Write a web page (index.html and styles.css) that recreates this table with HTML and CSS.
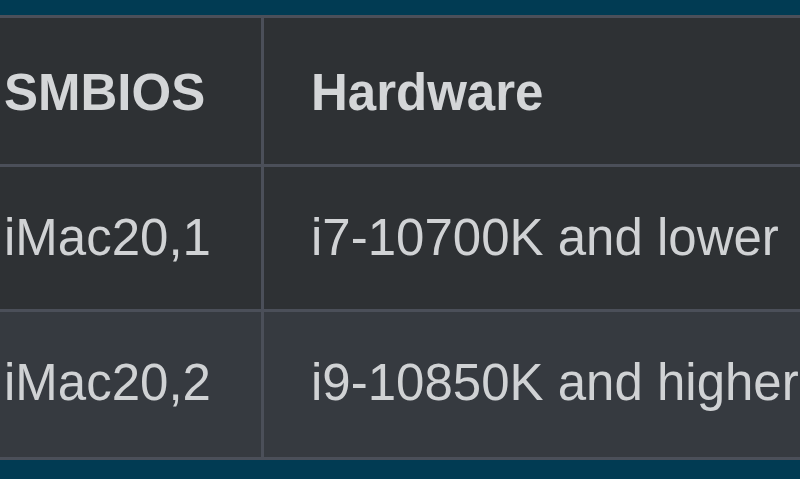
FILE: index.html
```html
<!DOCTYPE html>
<html lang="en">
<head>
<meta charset="utf-8">
<title>SMBIOS table</title>
<link rel="stylesheet" href="styles.css">
</head>
<body>
<table class="spec-table">
  <thead>
    <tr class="row row-head">
      <th class="cell cell-first">SMBIOS</th>
      <th class="cell">Hardware</th>
    </tr>
  </thead>
  <tbody>
    <tr class="row row-one">
      <td class="cell cell-first">iMac20,1</td>
      <td class="cell">i7-10700K and lower</td>
    </tr>
    <tr class="row row-two">
      <td class="cell cell-first">iMac20,2</td>
      <td class="cell">i9-10850K and higher</td>
    </tr>
  </tbody>
</table>
</body>
</html>
```

FILE: styles.css
```css
html, body {
  margin: 0;
  padding: 0;
  background: #013b53;
  overflow: hidden;
}

body {
  font-family: "Liberation Sans", Arial, sans-serif;
  color: #d0d2d4;
}

.spec-table {
  border-collapse: separate;
  border-spacing: 0;
  table-layout: fixed;
  width: 1100px;
  margin: 15px 0 0 -42px;
  border-top: 3px solid #4b4f59;
}

.cell {
  font-size: 51px;
  line-height: 60px;
  text-align: left;
  white-space: nowrap;
  padding: 41px 0 41px 47px;
  border-bottom: 3px solid #4b4f59;
  background: #2e3134;
  box-sizing: border-box;
}

.cell-first {
  width: 306px;
  padding-left: 46px;
  border-right: 3px solid #4b4f59;
}

.row-head .cell {
  font-weight: bold;
  color: #d4d6d8;
  padding-top: 45px;
  padding-bottom: 41px;
}

.row-one .cell {
  padding-top: 41px;
  padding-bottom: 41px;
}

.row-two .cell {
  background: #363a40;
  padding-top: 41px;
  padding-bottom: 44px;
}
```
